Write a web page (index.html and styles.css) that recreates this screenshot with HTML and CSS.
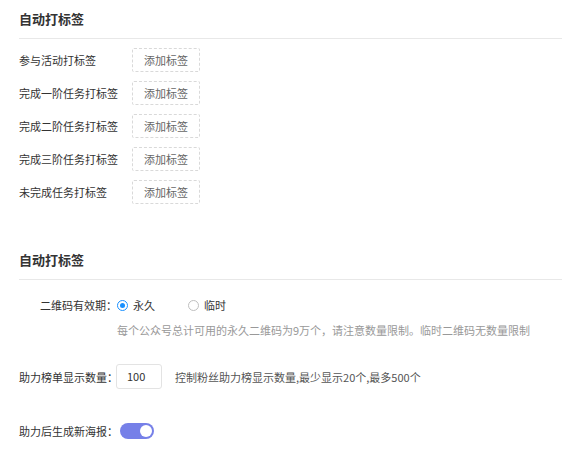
FILE: index.html
```html
<!DOCTYPE html>
<html lang="zh-CN">
<head>
<meta charset="utf-8">
<link rel="stylesheet" href="styles.css">
</head>
<body>
<div class="page">
  <section class="section">
    <h2 class="title">自动打标签</h2>
    <div class="tag-list">
      <div class="tag-row"><span class="tag-label">参与活动打标签</span><span class="tag-btn">添加标签</span></div>
      <div class="tag-row"><span class="tag-label">完成一阶任务打标签</span><span class="tag-btn">添加标签</span></div>
      <div class="tag-row"><span class="tag-label">完成二阶任务打标签</span><span class="tag-btn">添加标签</span></div>
      <div class="tag-row"><span class="tag-label">完成三阶任务打标签</span><span class="tag-btn">添加标签</span></div>
      <div class="tag-row"><span class="tag-label">未完成任务打标签</span><span class="tag-btn">添加标签</span></div>
    </div>
  </section>

  <section class="section second">
    <h2 class="title">自动打标签</h2>
    <div class="form-row radio-row">
      <span class="form-label">二维码有效期：</span>
      <div class="radios">
        <label class="radio checked"><span class="dot"></span><span>永久</span></label>
        <label class="radio"><span class="dot"></span><span>临时</span></label>
      </div>
    </div>
    <div class="hint">每个公众号总计可用的永久二维码为9万个，请注意数量限制。临时二维码无数量限制</div>
    <div class="form-row input-row">
      <span class="form-label">助力榜单显示数量：</span>
      <span class="num-input">100</span>
      <span class="inline-hint">控制粉丝助力榜显示数量,最少显示20个,最多500个</span>
    </div>
    <div class="form-row switch-row">
      <span class="form-label">助力后生成新海报：</span>
      <span class="switch"><span class="knob"></span></span>
    </div>
  </section>
</div>
</body>
</html>
```

FILE: styles.css
```css
* { box-sizing: border-box; }
html, body { margin: 0; padding: 0; background: #fff; }
body {
  font-family: "Noto Sans CJK SC", "Noto Sans", sans-serif;
  font-size: 11px;
  color: #333;
}
.page { padding-left: 19px; }
.section { display: flex; flex-direction: column; }
.title {
  margin: 0;
  padding-top: 9px;
  padding-bottom: 9px;
  height: 39px;
  line-height: 20px;
  font-size: 13px;
  font-weight: bold;
  color: #333;
  border-bottom: 1px solid #e8e8e8;
}
.tag-list {
  display: flex;
  flex-direction: column;
  gap: 9px;
  margin-top: 9px;
}
.tag-row {
  display: flex;
  align-items: center;
  height: 24px;
}
.tag-label { width: 113px; color: #333; }
.tag-btn {
  width: 68px;
  height: 24px;
  border: 1px dashed #d9d9d9;
  border-radius: 2px;
  display: flex;
  align-items: center;
  justify-content: center;
  color: #666;
}
.second { margin-top: 37px; }
.form-row { display: flex; align-items: center; }
.form-label { width: 98px; text-align: right; color: #333; white-space: nowrap; }
.radio-row { margin-top: 13px; height: 24px; }
.radios { display: flex; align-items: center; gap: 33px; }
.radio { display: flex; align-items: center; gap: 5px; color: #333; }
.dot {
  width: 11px; height: 11px;
  border: 1px solid #bfbfbf;
  border-radius: 50%;
  position: relative;
}
.radio.checked .dot { border-color: #1890ff; }
.radio.checked .dot::after {
  content: "";
  position: absolute;
  left: 2px; top: 2px;
  width: 5px; height: 5px;
  border-radius: 50%;
  background: #1890ff;
}
.hint {
  margin-top: 3px;
  padding-left: 98px;
  line-height: 20px;
  color: #999;
}
.input-row { margin-top: 24px; height: 25px; }
.num-input {
  width: 46px; height: 25px;
  border: 1px solid #e3e3e3;
  border-radius: 3px;
  padding-left: 10px;
  line-height: 23px;
  color: #333;
  margin-left: -1px;
}
.inline-hint { margin-left: 13px; color: #555; }
.switch-row { margin-top: 29px; height: 25px; }
.switch {
  margin-left: 3px;
  width: 34px; height: 16px;
  border-radius: 8px;
  background: #7680e8;
  position: relative;
}
.knob {
  position: absolute;
  right: 2px; top: 2px;
  width: 12px; height: 12px;
  border-radius: 50%;
  background: #fff;
}
```
